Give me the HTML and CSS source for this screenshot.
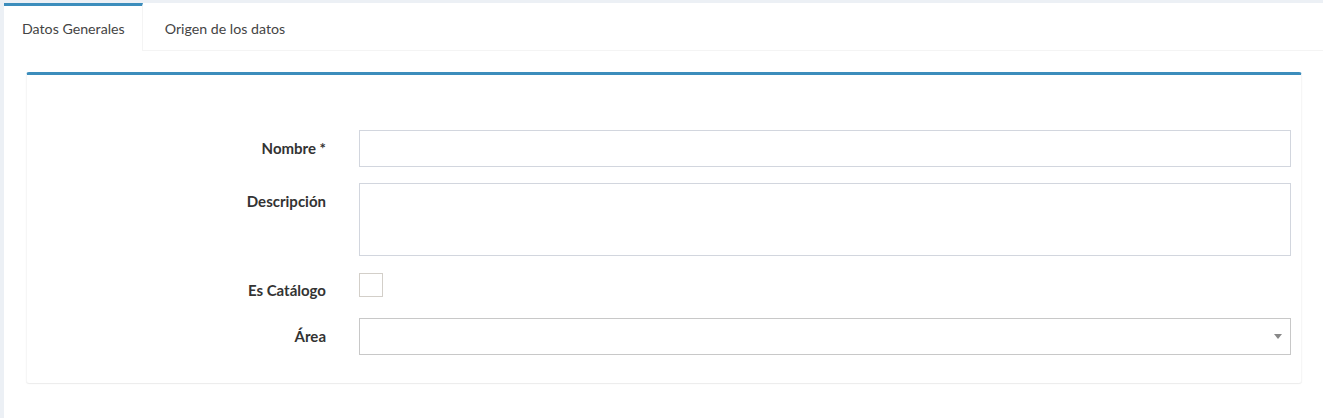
FILE: index.html
```html
<!DOCTYPE html>
<html lang="es">
<head>
<meta charset="utf-8">
<title>Formulario</title>
<link rel="stylesheet" href="styles.css">
</head>
<body>
<div class="page">
  <div class="tabs-custom">
    <ul class="tab-nav">
      <li class="tab active">Datos Generales</li>
      <li class="tab">Origen de los datos</li>
    </ul>
    <div class="tab-content">
      <div class="box">
        <form class="form">
          <div class="row">
            <label class="label">Nombre *</label>
            <div class="field"><input class="input" type="text"></div>
          </div>
          <div class="row">
            <label class="label">Descripción</label>
            <div class="field"><textarea class="input textarea"></textarea></div>
          </div>
          <div class="row row-check">
            <label class="label">Es Catálogo</label>
            <div class="field"><span class="check"></span></div>
          </div>
          <div class="row">
            <label class="label">Área</label>
            <div class="field">
              <div class="select"><span class="caret"></span></div>
            </div>
          </div>
        </form>
      </div>
    </div>
  </div>
</div>
</body>
</html>
```
FILE: styles.css
```css
html, body {
  margin: 0;
  padding: 0;
  background: #ecf0f5;
  font-family: "Lato", "Liberation Sans", sans-serif;
  font-size: 14px;
  color: #333;
}
.page {
  padding: 3px 0 0 4px;
  height: 415px;
}
.tabs-custom {
  background: #fff;
  height: 100%;
}
.tab-nav {
  list-style: none;
  margin: 0;
  padding: 0;
  display: flex;
  border-bottom: 1px solid #f4f4f4;
  height: 47px;
}
.tab {
  padding: 0 17px 0 18px;
  margin-right: 5px;
  border-top: 3px solid transparent;
  display: flex;
  align-items: center;
  color: #444;
  height: 44px;
  font-size: 14.2px;
}
.tab.active {
  border-top-color: #3c8dbc;
  border-right: 1px solid #f4f4f4;
  background: #fff;
  height: 45px;
  margin-right: 4px;
}
.tab-content {
  padding: 21px 21px 0 22px;
}
.box {
  border-top: 3px solid #3c8dbc;
  border-left: 1px solid #f6f6f6;
  border-right: 1px solid #f6f6f6;
  border-radius: 3px;
  box-shadow: 0 1px 1px rgba(0, 0, 0, 0.08);
  background: #fff;
  padding: 55px 10px 28px 0;
}
.row {
  display: flex;
  margin-bottom: 16px;
}
.row.row-check {
  margin-bottom: 18px;
}
.row:last-child {
  margin-bottom: 0;
}
.label {
  width: 299px;
  flex: none;
  text-align: right;
  font-weight: bold;
  font-size: 15px;
  padding-top: 8px;
  line-height: 20px;
  color: #333;
}
.field {
  flex: 1;
  margin-left: 33px;
}
.input {
  display: block;
  box-sizing: border-box;
  width: 100%;
  height: 37px;
  border: 1px solid #d2d6de;
  margin: 0;
  padding: 6px 12px;
  font: inherit;
  background: #fff;
}
.textarea {
  height: 73px;
  resize: none;
}
.check {
  display: block;
  width: 24px;
  height: 24px;
  box-sizing: border-box;
  border: 1px solid #d3cfc9;
  margin-top: 1px;
}
.select {
  position: relative;
  box-sizing: border-box;
  height: 37px;
  border: 1px solid #c8c8c8;
}
.caret {
  position: absolute;
  right: 8px;
  top: 15px;
  width: 0;
  height: 0;
  border-left: 4px solid transparent;
  border-right: 4px solid transparent;
  border-top: 5px solid #888;
}
```
